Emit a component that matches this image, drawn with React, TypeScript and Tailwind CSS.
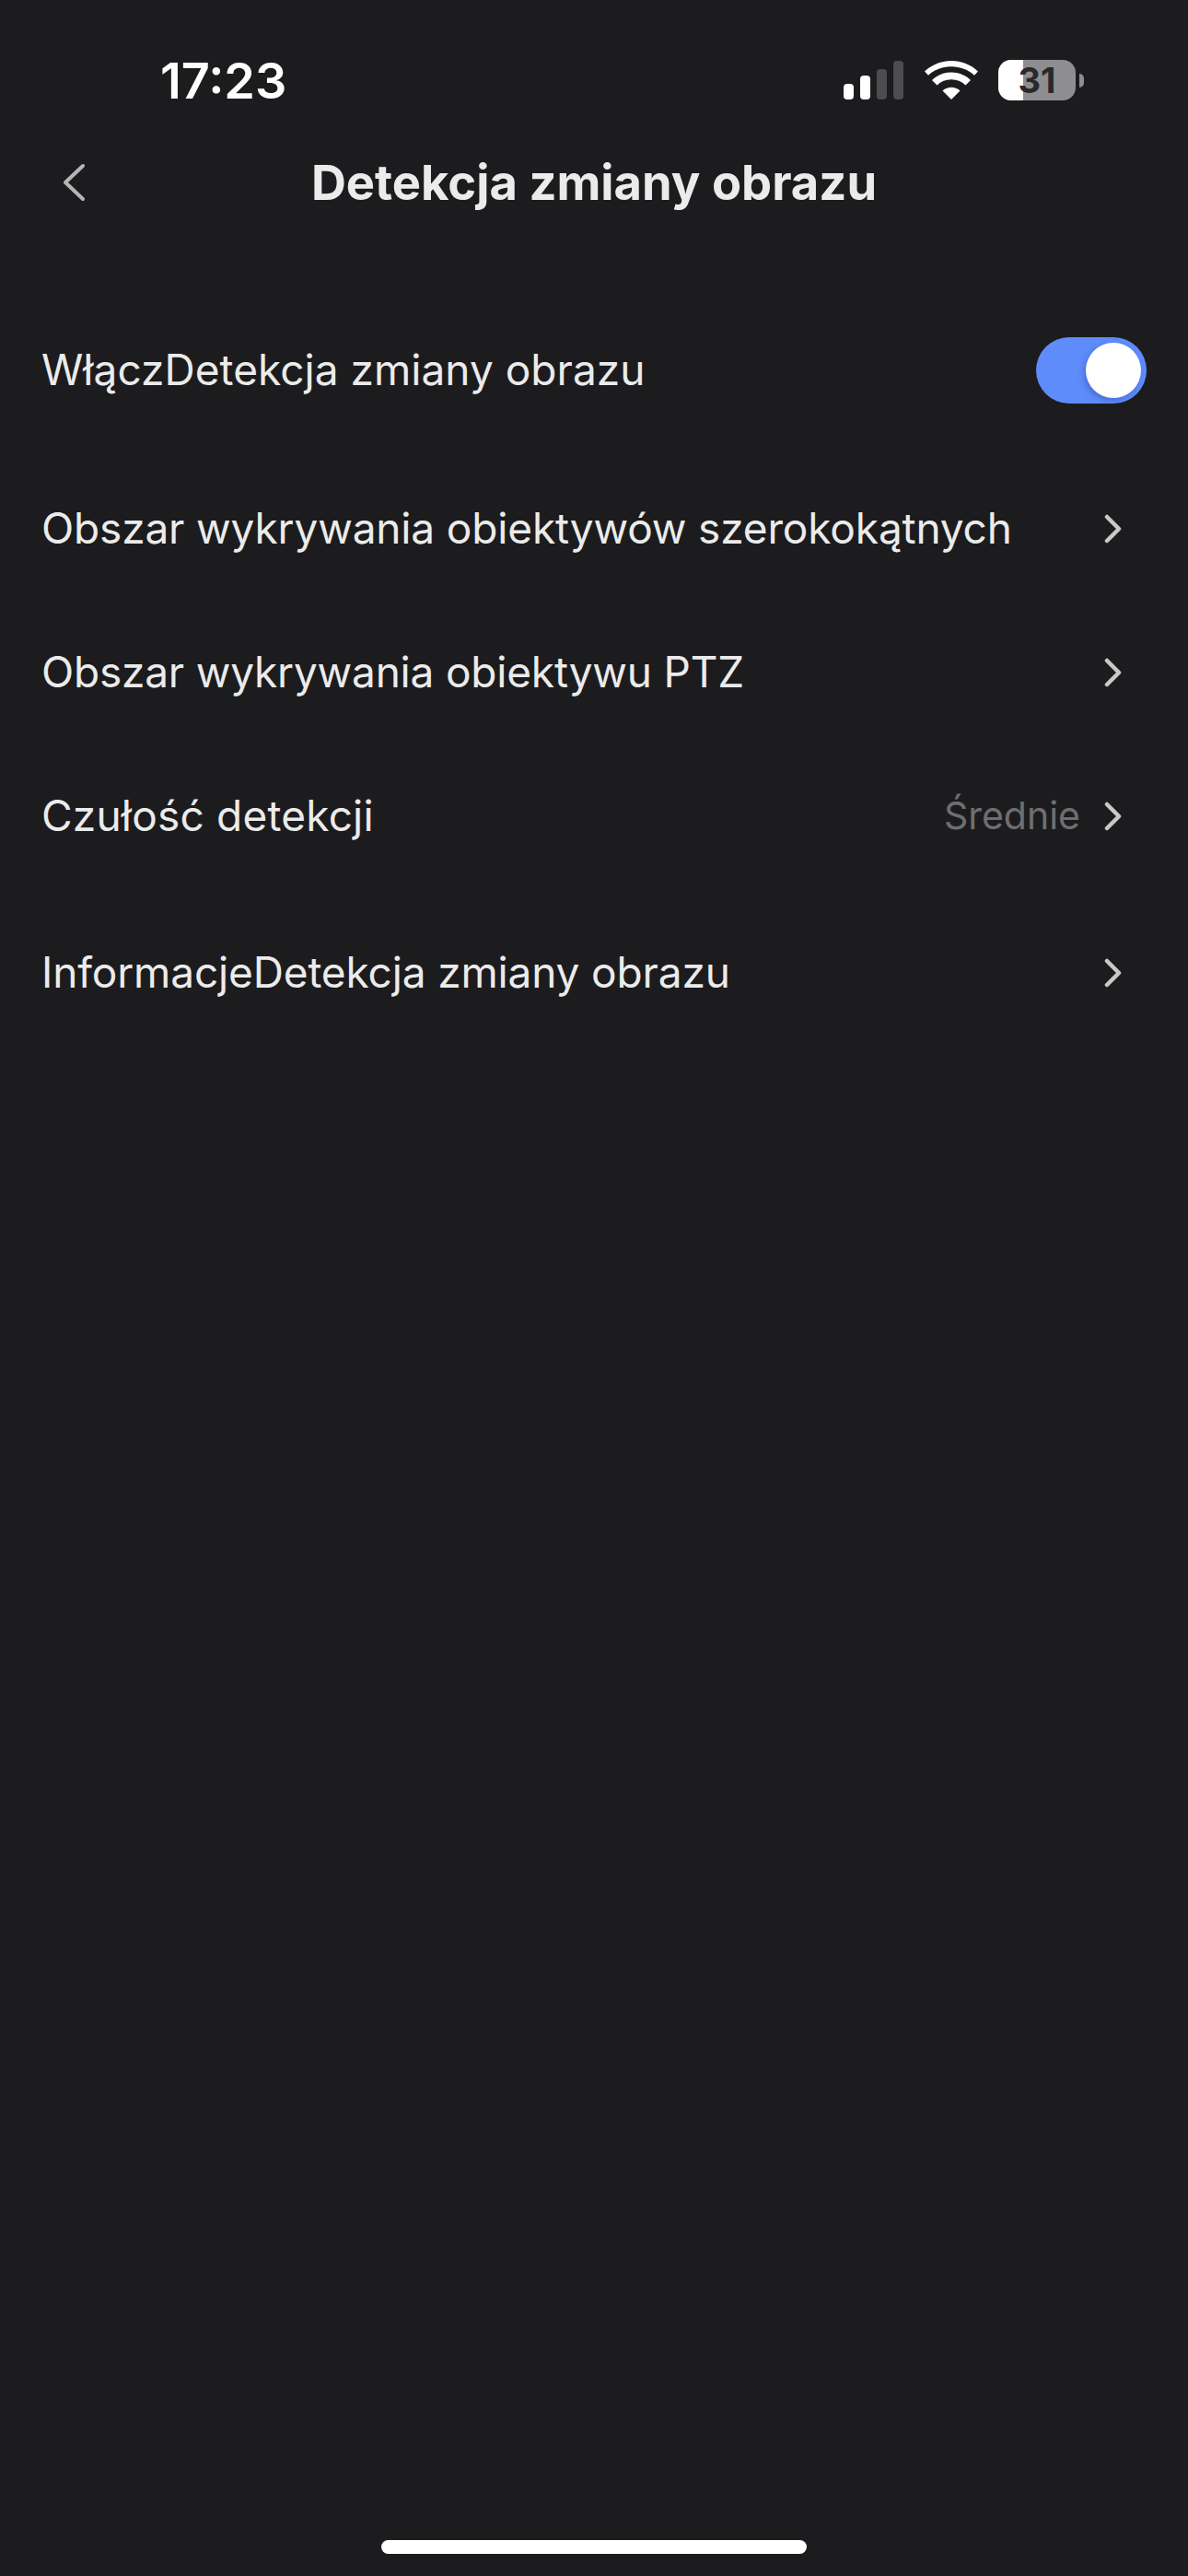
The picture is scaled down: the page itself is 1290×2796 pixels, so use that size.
function Chevron() {
  return (
    <svg width="20" height="32" viewBox="0 0 20 32" fill="none" className="shrink-0">
      <path d="M3 3L16 16L3 29" stroke="#c9c9c9" strokeWidth="4.500" strokeLinecap="round" strokeLinejoin="round" />
    </svg>
  );
}

function Row({ label, value, mt, tracking }: { label: string; value?: string; mt: string; tracking: string }) {
  return (
    <div className={`flex h-[60px] items-center justify-between pl-[45px] pr-[71px] ${mt}`}>
      <span className={`pb-[2px] text-[46px] leading-none text-[#ebebeb] ${tracking}`}>{label}</span>
      <div className="flex items-center gap-[26px]">
        {value && <span className="pb-[2px] text-[41px] leading-none text-[#6f6f6f]">{value}</span>}
        <Chevron />
      </div>
    </div>
  );
}

function StatusIcons() {
  return (
    <div className="flex items-center">
      <svg width="66" height="42" viewBox="0 0 66 42" className="shrink-0">
        <rect x="0" y="25" width="11" height="17" rx="4" fill="#ffffff" />
        <rect x="18" y="16" width="11" height="26" rx="4" fill="#ffffff" />
        <rect x="36" y="9" width="11" height="33" rx="4" fill="#4d4d4f" />
        <rect x="54" y="0" width="11" height="42" rx="4" fill="#4d4d4f" />
      </svg>
      <svg width="58" height="42" viewBox="0 0 58 42" className="ml-[22px] shrink-0">
        <path d="M29 42L19.5 32.5C25 27.5 33 27.5 38.500 32.500Z" fill="#ffffff" />
        <path d="M29 13.500C37 13.500 44.500 16.500 50 22L44.500 27.500C40.300 23.500 34.800 21.300 29 21.300C23.200 21.300 17.700 23.500 13.500 27.500L8 22C13.500 16.500 21 13.500 29 13.500Z" fill="#ffffff" transform="translate(0 -1)" />
        <path d="M29 0C40 0 50.500 4.200 58 11.500L54 15.800C47.500 9.700 38.500 6.300 29 6.300C19.500 6.300 10.500 9.700 4 15.800L0 11.500C7.500 4.200 18 0 29 0Z" fill="#ffffff" />
      </svg>
      <div className="relative ml-[22px] flex h-[44px] w-[84px] shrink-0 items-center justify-center overflow-hidden rounded-[14px] bg-[#8e8e90]">
        <div className="absolute inset-y-0 left-0 w-[27px] bg-white" />
        <span className="relative text-[38px] font-bold leading-none text-[#29292b]">31</span>
      </div>
      <div className="ml-[4px] h-[15px] w-[5px] rounded-r-full bg-[#8e8e90]" />
    </div>
  );
}

export default function App() {
  return (
    <div
      className="flex h-[2796px] w-[1290px] flex-col overflow-hidden bg-[#1c1c1e]"
      style={{ fontFamily: "Inter, 'Noto Sans', sans-serif" }}
    >
      <div className="flex h-[174px] shrink-0 items-center justify-between pl-[174px] pr-[113px]">
        <span className="pt-[2px] text-[54px] font-semibold leading-none text-white">17:23</span>
        <StatusIcons />
      </div>

      <div className="relative flex h-[48px] shrink-0 items-center justify-center">
        <svg width="28" height="44" viewBox="0 0 28 44" fill="none" className="absolute left-[66px] top-[2px]">
          <path d="M24 4L5 22L24 40" stroke="#b5b5b5" strokeWidth="4" strokeLinecap="round" strokeLinejoin="round" />
        </svg>
        <span className="text-[52.5px] font-bold leading-none text-[#ebebeb]">Detekcja zmiany obrazu</span>
      </div>

      <div className="mt-[144px] flex h-[72px] shrink-0 items-center justify-between pl-[45px] pr-[45px]">
        <span className="pb-[2px] text-[46px] leading-none tracking-[0.03px] text-[#ebebeb]">WłączDetekcja zmiany obrazu</span>
        <div className="flex h-[72px] w-[120px] items-center justify-end rounded-full bg-[#5f8cfb] pr-[6px]">
          <div className="h-[60px] w-[60px] rounded-full bg-white shadow-[-2px_3px_6px_rgba(50,80,180,0.5)]" />
        </div>
      </div>

      <Row label="Obszar wykrywania obiektywów szerokokątnych" mt="mt-[106px]" tracking="tracking-[-0.15px]" />
      <Row label="Obszar wykrywania obiektywu PTZ" mt="mt-[96px]" tracking="tracking-[-0.2px]" />
      <Row label="Czułość detekcji" value="Średnie" mt="mt-[96px]" tracking="tracking-[0.2px]" />
      <Row label="InformacjeDetekcja zmiany obrazu" mt="mt-[110px]" tracking="tracking-[-0.15px]" />

      <div className="mt-auto mb-[24px] h-[15px] w-[462px] shrink-0 self-center rounded-full bg-white" />
    </div>
  );
}
